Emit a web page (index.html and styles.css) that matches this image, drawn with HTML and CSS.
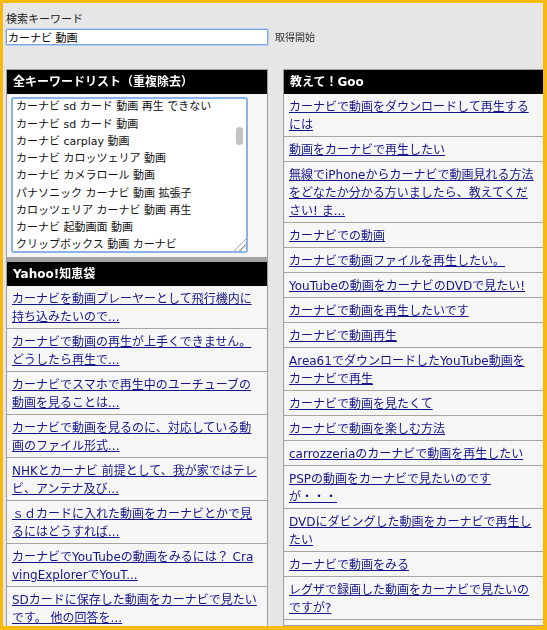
FILE: index.html
```html
<!DOCTYPE html>
<html lang="ja">
<head>
<meta charset="utf-8">
<title>キーワード取得</title>
<link rel="stylesheet" href="styles.css">
</head>
<body>
<div class="frame">
  <div class="search">
    <label class="search-label" for="q">検索キーワード</label>
    <div class="search-row">
      <input id="q" class="search-input" type="text" value="カーナビ 動画">
      <button class="fetch-btn" type="button">取得開始</button>
    </div>
  </div>
  <div class="columns">
    <div class="col">
      <section class="panel panel-keywords">
        <h2 class="panel-title">全キーワードリスト（重複除去）</h2>
        <div class="panel-body">
          <div class="kw-wrap">
<textarea class="kw-box">カーナビ 動画
カーナビ 動画 再生
カーナビ 動画 見る
カーナビ 動画 形式
カーナビ 動画 usb
カーナビ 動画 sd
カーナビ 動画 iphone
カーナビ 動画 スマホ
カーナビ 動画 youtube
カーナビ 動画 dvd
カーナビ 動画 変換
カーナビ 動画 ファイル
カーナビ sd カード 動画 再生
カーナビ sd カード 動画 再生 できない
カーナビ sd カード 動画
カーナビ carplay 動画
カーナビ カロッツェリア 動画
カーナビ カメラロール 動画
パナソニック カーナビ 動画 拡張子
カロッツェリア カーナビ 動画 再生
カーナビ 起動画面 動画
クリップボックス 動画 カーナビ
カーナビ 動画 走行中
カーナビ 動画 ケンウッド
カーナビ 動画 パナソニック
カーナビ 動画 パイオニア
カーナビ 動画 イクリプス
カーナビ 動画 アルパイン
カーナビ 動画 トヨタ
カーナビ 動画 ホンダ
カーナビ 動画 日産
カーナビ 動画 mp4
カーナビ 動画 avi
カーナビ 動画 wmv
カーナビ 動画 拡張子
カーナビ 動画 コーデック
カーナビ 動画 再生できない
カーナビ 動画 音だけ
カーナビ 動画 映らない
カーナビ 動画 ミラーリング
カーナビ 動画 hdmi
カーナビ 動画 bluetooth
カーナビ 動画 ストリーミング
カーナビ 動画 アプリ
カーナビ 動画 android
カーナビ 動画 amazon プライム
カーナビ 動画 netflix
カーナビ 動画 ダウンロード
カーナビ 動画 保存
カーナビ 動画 入れ方
カーナビ 動画 取り込み
カーナビ 動画 テレビ
カーナビ 動画 地デジ
カーナビ 動画 ブルーレイ
カーナビ 動画 解除
カーナビ 動画 キャンセラー
カーナビ 動画 助手席
カーナビ 動画 後部座席
カーナビ 動画 モニター
カーナビ 動画 おすすめ
カーナビ 動画 比較
カーナビ 動画 ランキング
カーナビ 動画 容量
カーナビ 動画 画質
カーナビ 動画 編集</textarea>
            <span class="kw-thumb" aria-hidden="true"></span>
          </div>
        </div>
      </section>
      <section class="panel panel-yahoo">
        <h2 class="panel-title">Yahoo!知恵袋</h2>
        <ul class="qa-list">
          <li class="qa-item"><a class="qa-link" href="#">カーナビを動画プレーヤーとして飛行機内に持ち込みたいので...</a></li>
          <li class="qa-item"><a class="qa-link" href="#">カーナビで動画の再生が上手くできません。どうしたら再生で...</a></li>
          <li class="qa-item"><a class="qa-link" href="#">カーナビでスマホで再生中のユーチューブの動画を見ることは...</a></li>
          <li class="qa-item"><a class="qa-link" href="#">カーナビで動画を見るのに、対応している動画のファイル形式...</a></li>
          <li class="qa-item"><a class="qa-link" href="#">NHKとカーナビ 前提として、我が家ではテレビ、アンテナ及び...</a></li>
          <li class="qa-item"><a class="qa-link" href="#">ｓｄカードに入れた動画をカーナビとかで見るにはどうすれば...</a></li>
          <li class="qa-item"><a class="qa-link" href="#">カーナビでYouTubeの動画をみるには？ CravingExplorerでYouT...</a></li>
          <li class="qa-item"><a class="qa-link" href="#">SDカードに保存した動画をカーナビで見たいです。 他の回答を...</a></li>
        </ul>
      </section>
    </div>
    <div class="col">
      <section class="panel panel-goo">
        <h2 class="panel-title">教えて！Goo</h2>
        <ul class="qa-list">
          <li class="qa-item"><a class="qa-link" href="#">カーナビで動画をダウンロードして再生するには</a></li>
          <li class="qa-item"><a class="qa-link" href="#">動画をカーナビで再生したい</a></li>
          <li class="qa-item"><a class="qa-link" href="#">無線でiPhoneからカーナビで動画見れる方法をどなたか分かる方いましたら、教えてください! ま...</a></li>
          <li class="qa-item"><a class="qa-link" href="#">カーナビでの動画</a></li>
          <li class="qa-item"><a class="qa-link" href="#">カーナビで動画ファイルを再生したい。</a></li>
          <li class="qa-item"><a class="qa-link" href="#">YouTubeの動画をカーナビのDVDで見たい!</a></li>
          <li class="qa-item"><a class="qa-link" href="#">カーナビで動画を再生したいです</a></li>
          <li class="qa-item"><a class="qa-link" href="#">カーナビで動画再生</a></li>
          <li class="qa-item"><a class="qa-link" href="#">Area61でダウンロードしたYouTube動画をカーナビで再生</a></li>
          <li class="qa-item"><a class="qa-link" href="#">カーナビで動画を見たくて</a></li>
          <li class="qa-item"><a class="qa-link" href="#">カーナビで動画を楽しむ方法</a></li>
          <li class="qa-item"><a class="qa-link" href="#">carrozzeriaのカーナビで動画を再生したい</a></li>
          <li class="qa-item"><a class="qa-link" href="#">PSPの動画をカーナビで見たいのですが・・・</a></li>
          <li class="qa-item"><a class="qa-link" href="#">DVDにダビングした動画をカーナビで再生したい</a></li>
          <li class="qa-item"><a class="qa-link" href="#">カーナビで動画をみる</a></li>
          <li class="qa-item"><a class="qa-link" href="#">レグザで録画した動画をカーナビで見たいのですが?</a></li>
        </ul>
      </section>
    </div>
  </div>
</div>
<script src="script.js"></script>
</body>
</html>
```

FILE: styles.css
```css
html, body {
  margin: 0;
  padding: 0;
}

body {
  font-family: "DejaVu Sans", "Noto Sans CJK JP", sans-serif;
  color: #111;
}

.frame {
  box-sizing: border-box;
  width: 547px;
  height: 630px;
  border-style: solid;
  border-color: #f8ba0c;
  border-width: 3px 4px 4px 3px;
  background: #e6e6e6;
  padding: 10px 0 0 3px;
  overflow: hidden;
  display: flex;
  flex-direction: column;
}

.search-label {
  display: block;
  font-size: 11px;
  line-height: 14px;
  color: #222;
}

.search-row {
  display: flex;
  align-items: center;
  margin-top: 2px;
}

.search-input {
  box-sizing: border-box;
  width: 262px;
  height: 16px;
  margin: 0;
  padding: 0 1px;
  border: 1px solid #79a6e3;
  box-shadow: 0 0 0 1px #b3cff3;
  border-radius: 1px;
  background: #fff;
  color: #000;
  font-family: inherit;
  font-size: 11px;
  line-height: 14px;
  outline: none;
}

.fetch-btn {
  margin: 2px 0 0 7px;
  padding: 0;
  border: 0;
  background: none;
  font-family: inherit;
  font-size: 10px;
  line-height: 14px;
  color: #333;
}

.columns {
  flex: 1;
  display: grid;
  grid-template-columns: 262px 262px;
  column-gap: 15px;
  margin-top: 24px;
  min-height: 0;
}

.col {
  display: flex;
  flex-direction: column;
  min-height: 0;
}

.panel {
  border: 1px solid #9e9e9e;
  background: #f6f6f6;
}

.panel-yahoo,
.panel-goo {
  flex: 1;
}

.panel-yahoo {
  border-top-width: 4px;
  border-top-color: #a2a2a2;
}

.panel-title {
  margin: 0;
  height: 24px;
  padding-left: 6px;
  background: #000;
  color: #fff;
  font-size: 12px;
  font-weight: bold;
  line-height: 24px;
}

.panel-keywords .panel-body {
  padding: 3px 4px 4px 4px;
}

.kw-wrap {
  position: relative;
  width: 237px;
}

.kw-box {
  display: block;
  box-sizing: border-box;
  width: 237px;
  height: 156px;
  margin: 0;
  padding: 2px 14px 2px 3px;
  border: 2px solid #8ab3ea;
  border-radius: 3px;
  background: #fff;
  color: #111;
  font-family: inherit;
  font-size: 11px;
  line-height: 17.25px;
  overflow-y: scroll;
  resize: both;
  outline: none;
}

.kw-box::-webkit-scrollbar {
  width: 0;
  background: transparent;
}

.kw-box::-webkit-resizer {
  background:
    linear-gradient(135deg, transparent 0 58%, #a8a8a8 58% 63%, transparent 63% 76%, #a8a8a8 76% 81%, transparent 81%),
    #fff;
}

.kw-thumb {
  position: absolute;
  top: 30px;
  right: 5px;
  width: 7px;
  height: 18px;
  border-radius: 4px;
  background: #c4c4c4;
  pointer-events: none;
}

.qa-list {
  list-style: none;
  margin: 0;
  padding: 0;
}

.qa-item {
  padding: 4px 9.5px 2px 5px;
  border-bottom: 1px solid #a5a5a5;
  font-size: 12px;
  line-height: 18px;
  word-break: break-all;
  text-spacing-trim: space-all;
}

.qa-link {
  color: #16168a;
  text-decoration: underline;
}
```

FILE: script.js
```js
(function () {
  var box = document.querySelector('.kw-box');
  if (box) {
    box.scrollTop = 227;
  }
  var input = document.getElementById('q');
  if (input) {
    input.focus();
    var end = input.value.length;
    input.setSelectionRange(end, end);
  }
})();
```
